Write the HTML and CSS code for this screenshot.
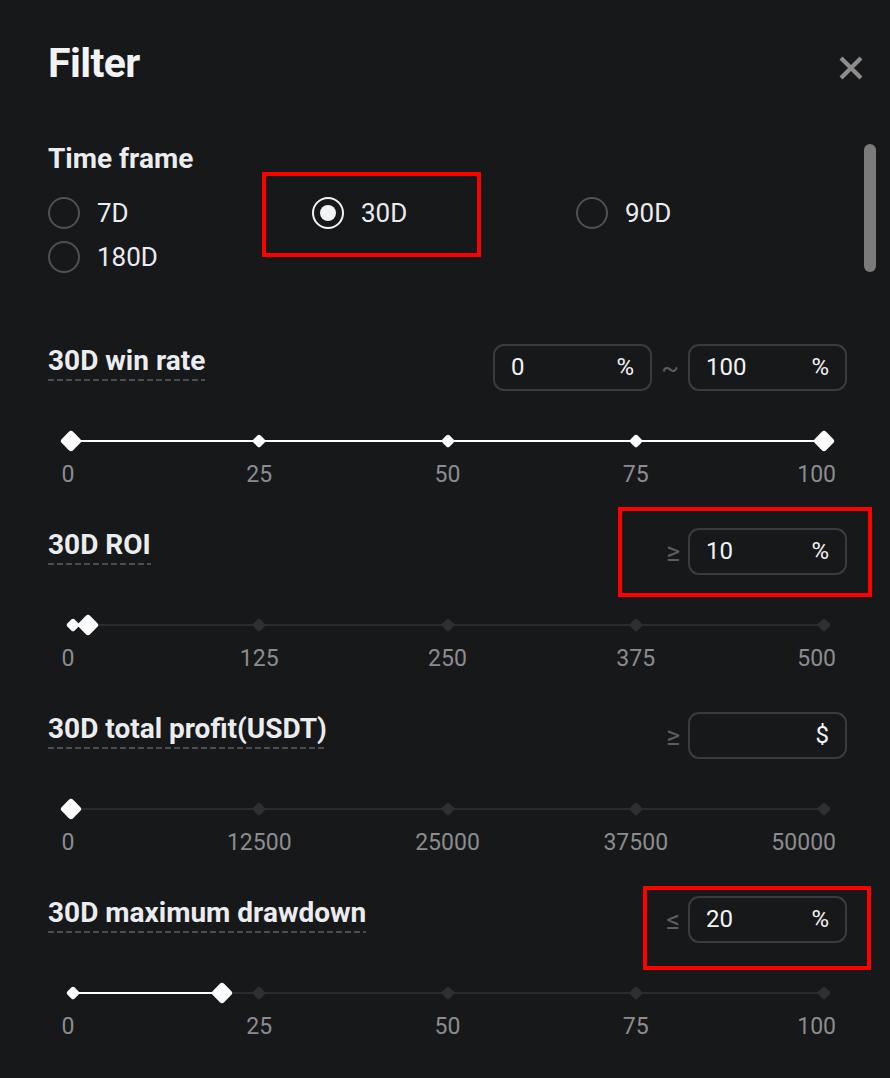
FILE: index.html
```html
<!DOCTYPE html>
<html lang="en">
<head>
<meta charset="utf-8">
<title>Filter</title>
<link rel="stylesheet" href="styles.css">
</head>
<body>
<div class="panel">
  <header class="header">
    <h1 class="title">Filter</h1>
    <button class="close" aria-label="Close">
      <svg width="26" height="26" viewBox="0 0 26 26"><path d="M3 3 L23 23 M23 3 L3 23" stroke="#8d8d8d" stroke-width="4.2" stroke-linecap="butt"/></svg>
    </button>
  </header>

  <section class="timeframe">
    <div class="section-title">Time frame</div>
    <div class="radio-grid">
      <label class="radio"><span class="dot"></span><span class="radio-text">7D</span></label>
      <label class="radio checked"><span class="dot"></span><span class="radio-text">30D</span></label>
      <label class="radio"><span class="dot"></span><span class="radio-text">90D</span></label>
      <label class="radio"><span class="dot"></span><span class="radio-text">180D</span></label>
    </div>
  </section>

  <section class="range first">
    <div class="range-head">
      <span class="range-label">30D win rate</span>
      <div class="range-inputs">
        <div class="field"><span class="field-value">0</span><span class="field-unit">%</span></div>
        <span class="sep tilde">~</span>
        <div class="field"><span class="field-value">100</span><span class="field-unit">%</span></div>
      </div>
    </div>
    <div class="slider">
      <div class="track"></div>
      <div class="track-fill" style="left:0%;width:100%"></div>
      <span class="mark on" style="left:25%"></span>
      <span class="mark on" style="left:50%"></span>
      <span class="mark on" style="left:75%"></span>
      <span class="handle" style="left:0%"></span>
      <span class="handle" style="left:100%"></span>
    </div>
    <div class="ticks">
      <span style="left:-0.4%">0</span>
      <span style="left:25%">25</span>
      <span style="left:50%">50</span>
      <span style="left:75%">75</span>
      <span class="last">100</span>
    </div>
  </section>

  <section class="range">
    <div class="range-head">
      <span class="range-label">30D ROI</span>
      <div class="range-inputs">
        <span class="sep">≥</span>
        <div class="field"><span class="field-value">10</span><span class="field-unit">%</span></div>
      </div>
    </div>
    <div class="slider">
      <div class="track"></div>
      <div class="track-fill" style="left:0%;width:2%"></div>
      <span class="mark on" style="left:0.3%"></span>
      <span class="mark" style="left:25%"></span>
      <span class="mark" style="left:50%"></span>
      <span class="mark" style="left:75%"></span>
      <span class="mark" style="left:100%"></span>
      <span class="handle" style="left:2.2%"></span>
    </div>
    <div class="ticks">
      <span style="left:-0.4%">0</span>
      <span style="left:25%">125</span>
      <span style="left:50%">250</span>
      <span style="left:75%">375</span>
      <span class="last">500</span>
    </div>
  </section>

  <section class="range">
    <div class="range-head">
      <span class="range-label">30D total profit(USDT)</span>
      <div class="range-inputs">
        <span class="sep">≥</span>
        <div class="field"><span class="field-value"></span><span class="field-unit">$</span></div>
      </div>
    </div>
    <div class="slider">
      <div class="track"></div>
      <span class="mark" style="left:25%"></span>
      <span class="mark" style="left:50%"></span>
      <span class="mark" style="left:75%"></span>
      <span class="mark" style="left:100%"></span>
      <span class="handle" style="left:0%"></span>
    </div>
    <div class="ticks">
      <span style="left:-0.4%">0</span>
      <span style="left:25%">12500</span>
      <span style="left:50%">25000</span>
      <span style="left:75%">37500</span>
      <span class="last">50000</span>
    </div>
  </section>

  <section class="range">
    <div class="range-head">
      <span class="range-label">30D maximum drawdown</span>
      <div class="range-inputs">
        <span class="sep">≤</span>
        <div class="field"><span class="field-value">20</span><span class="field-unit">%</span></div>
      </div>
    </div>
    <div class="slider">
      <div class="track"></div>
      <div class="track-fill" style="left:0%;width:20%"></div>
      <span class="mark on" style="left:0.3%"></span>
      <span class="mark" style="left:25%"></span>
      <span class="mark" style="left:50%"></span>
      <span class="mark" style="left:75%"></span>
      <span class="mark" style="left:100%"></span>
      <span class="handle" style="left:20%"></span>
    </div>
    <div class="ticks">
      <span style="left:-0.4%">0</span>
      <span style="left:25%">25</span>
      <span style="left:50%">50</span>
      <span style="left:75%">75</span>
      <span class="last">100</span>
    </div>
  </section>

  <div class="scrollbar"></div>
  <div class="annot annot-1"></div>
  <div class="annot annot-2"></div>
  <div class="annot annot-3"></div>
</div>
</body>
</html>
```

FILE: styles.css
```css
* { box-sizing: border-box; }

html, body {
  margin: 0;
  padding: 0;
  background: #17181a;
  height: 100%;
  overflow: hidden;
}

body {
  font-family: Roboto, "Liberation Sans", Arial, sans-serif;
  color: #eaecef;
}

.panel {
  position: relative;
  width: 890px;
  height: 1078px;
  padding-left: 48px;
}

.header {
  display: flex;
  justify-content: space-between;
  align-items: flex-start;
  height: 126px;
  padding-top: 38px;
  padding-right: 26px;
}

.title {
  margin: 0;
  font-size: 41px;
  line-height: 50px;
  font-weight: 700;
  color: #f2f3f5;
  letter-spacing: -0.6px;
}

.close {
  margin-top: 17px;
  padding: 0;
  border: 0;
  background: none;
  width: 26px;
  height: 26px;
  display: block;
}

.close svg { display: block; }

.timeframe {
  padding-top: 17px;
}

.section-title {
  font-size: 28px;
  line-height: 32px;
  font-weight: 700;
}

.radio-grid {
  margin-top: 16px;
  display: grid;
  grid-template-columns: 264px 264px 264px;
  grid-auto-rows: 44px;
}

.radio {
  display: flex;
  align-items: center;
  gap: 17px;
}

.dot {
  width: 32px;
  height: 32px;
  border-radius: 50%;
  border: 2px solid #505154;
  display: flex;
  align-items: center;
  justify-content: center;
}

.radio.checked .dot {
  border-color: #f2f3f5;
}

.radio.checked .dot::after {
  content: "";
  width: 16px;
  height: 16px;
  border-radius: 50%;
  background: #f2f3f5;
}

.radio-text {
  font-size: 26px;
  line-height: 44px;
  color: #eaecef;
}

.range {
  width: 799px;
  margin-top: 39px;
}

.range.first {
  margin-top: 65px;
}

.range-head {
  display: flex;
  justify-content: space-between;
  align-items: flex-start;
  height: 47px;
}

.range-label {
  margin-top: 1px;
  display: inline-block;
  font-size: 28px;
  line-height: 32px;
  font-weight: 700;
  padding-bottom: 2px;
  position: relative;
}

.range-label::after {
  content: "";
  position: absolute;
  left: 0;
  right: 0;
  bottom: -2px;
  height: 2px;
  background-image: repeating-linear-gradient(to right, #4b4c4f 0 6px, transparent 6px 9px);
}

.range-inputs {
  display: flex;
  align-items: center;
  gap: 8px;
  height: 47px;
}

.sep {
  color: #5d5e61;
  font-size: 27px;
  width: 14px;
  text-align: center;
}

.sep.tilde {
  font-size: 26px;
  width: 20px;
}

.field {
  width: 159px;
  height: 47px;
  border: 2px solid #3a3b3e;
  border-radius: 11px;
  display: flex;
  justify-content: space-between;
  align-items: center;
  padding: 0 16px 0 16px;
  font-size: 24px;
  line-height: 43px;
  color: #f2f3f5;
}

.slider {
  position: relative;
  margin-top: 30px;
  margin-left: 23px;
  width: 753px;
  height: 40px;
}

.track {
  position: absolute;
  left: 0;
  right: 0;
  top: 19px;
  height: 2px;
  background: #2a2b2e;
}

.track-fill {
  position: absolute;
  top: 19px;
  height: 2px;
  background: #ffffff;
}

.mark {
  position: absolute;
  top: 20px;
  width: 10px;
  height: 10px;
  border-radius: 2px;
  background: #2e2f33;
  transform: translate(-50%, -50%) rotate(45deg);
}

.mark.on {
  background: #ffffff;
}

.handle {
  position: absolute;
  top: 20px;
  width: 16px;
  height: 16px;
  border-radius: 3px;
  background: #ffffff;
  transform: translate(-50%, -50%) rotate(45deg);
}

.ticks {
  position: relative;
  margin-left: 23px;
  width: 753px;
  height: 28px;
  font-size: 23px;
  line-height: 28px;
  color: #8b8c8f;
}

.ticks span {
  position: absolute;
  top: 0;
  transform: translateX(-50%);
  white-space: nowrap;
}

.ticks span.last {
  left: auto;
  right: -12px;
  transform: none;
}

.scrollbar {
  position: absolute;
  left: 864px;
  top: 144px;
  width: 12px;
  height: 128px;
  border-radius: 6px;
  background: #7b7b7b;
}

.annot {
  position: absolute;
  border: 4px solid #ff0000;
  pointer-events: none;
}

.annot-1 { left: 262px; top: 172px; width: 219px; height: 85px; }
.annot-2 { left: 618px; top: 507px; width: 254px; height: 90px; }
.annot-3 { left: 643px; top: 886px; width: 228px; height: 84px; }
```
